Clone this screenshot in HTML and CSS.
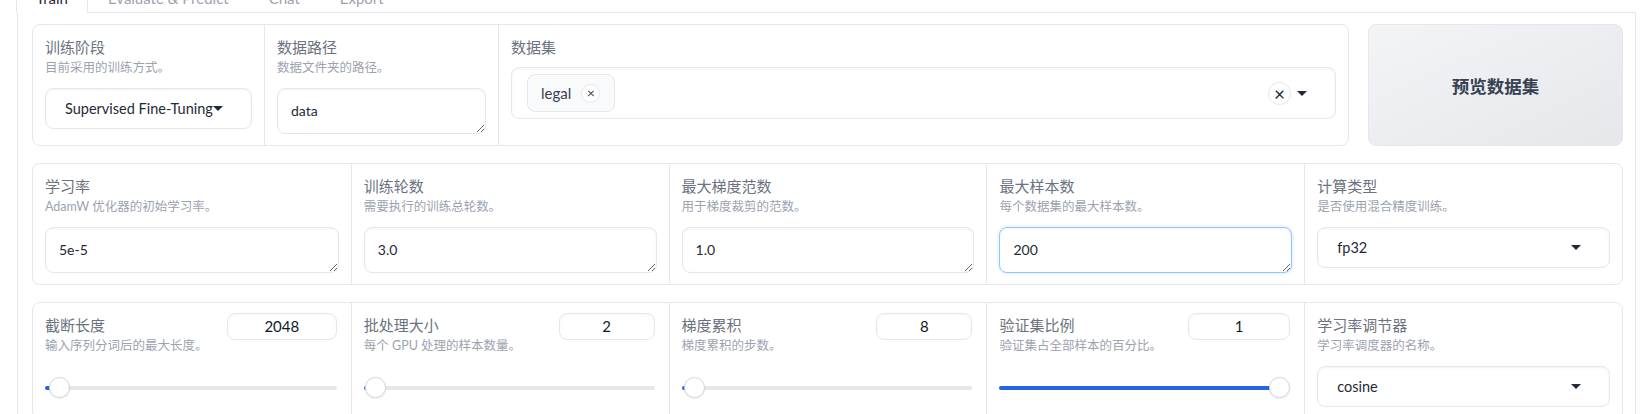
FILE: index.html
```html
<!DOCTYPE html>
<html lang="zh-CN">
<head>
    <meta charset="UTF-8">
    <meta name="viewport" content="width=device-width, initial-scale=1.0">
    <title>LLaMA Board - Train</title>
    <link rel="stylesheet" href="styles.css">
</head>
<body>
    <div class="tabs">
        <!-- Abas -->
        <div class="tab-nav">
            <button class="tab selected">Train</button>
            <button class="tab">Evaluate &amp; Predict</button>
            <button class="tab">Chat</button>
            <button class="tab">Export</button>
        </div>

        <div class="tab-panel">
            <!-- Linha 1: estágio, caminho, dataset + botão -->
            <div class="row-top">
                <div class="group group-top">
                    <div class="field">
                        <div class="field-label">训练阶段</div>
                        <div class="info">目前采用的训练方式。</div>
                        <div class="select">
                            <span class="select-value">Supervised Fine-Tuning</span>
                            <span class="caret"></span>
                        </div>
                    </div>
                    <div class="field">
                        <div class="field-label">数据路径</div>
                        <div class="info">数据文件夹的路径。</div>
                        <textarea class="text-input" rows="1">data</textarea>
                    </div>
                    <div class="field">
                        <div class="field-label">数据集</div>
                        <div class="multiselect">
                            <div class="chip">
                                <span>legal</span>
                                <span class="chip-remove">×</span>
                            </div>
                            <div class="multi-actions">
                                <span class="clear-btn">×</span>
                                <span class="caret"></span>
                            </div>
                        </div>
                    </div>
                </div>
                <button class="btn-preview">预览数据集</button>
            </div>

            <!-- Linha 2: hiperparâmetros -->
            <div class="group group-five">
                <div class="field">
                    <div class="field-label">学习率</div>
                    <div class="info">AdamW 优化器的初始学习率。</div>
                    <textarea class="text-input" rows="1">5e-5</textarea>
                </div>
                <div class="field">
                    <div class="field-label">训练轮数</div>
                    <div class="info">需要执行的训练总轮数。</div>
                    <textarea class="text-input" rows="1">3.0</textarea>
                </div>
                <div class="field">
                    <div class="field-label">最大梯度范数</div>
                    <div class="info">用于梯度裁剪的范数。</div>
                    <textarea class="text-input" rows="1">1.0</textarea>
                </div>
                <div class="field">
                    <div class="field-label">最大样本数</div>
                    <div class="info">每个数据集的最大样本数。</div>
                    <textarea class="text-input focused" rows="1">200</textarea>
                </div>
                <div class="field">
                    <div class="field-label">计算类型</div>
                    <div class="info">是否使用混合精度训练。</div>
                    <div class="select">
                        <span class="select-value">fp32</span>
                        <span class="caret"></span>
                    </div>
                </div>
            </div>

            <!-- Linha 3: sliders -->
            <div class="group group-five">
                <div class="field">
                    <div class="slider-head">
                        <div>
                            <div class="field-label">截断长度</div>
                            <div class="info">输入序列分词后的最大长度。</div>
                        </div>
                        <div class="num num-wide">2048</div>
                    </div>
                    <div class="slider" style="--v: 0.016">
                        <div class="track"><div class="fill"></div></div>
                        <div class="thumb"></div>
                    </div>
                </div>
                <div class="field">
                    <div class="slider-head">
                        <div>
                            <div class="field-label">批处理大小</div>
                            <div class="info">每个 GPU 处理的样本数量。</div>
                        </div>
                        <div class="num">2</div>
                    </div>
                    <div class="slider" style="--v: 0.006">
                        <div class="track"><div class="fill"></div></div>
                        <div class="thumb"></div>
                    </div>
                </div>
                <div class="field">
                    <div class="slider-head">
                        <div>
                            <div class="field-label">梯度累积</div>
                            <div class="info">梯度累积的步数。</div>
                        </div>
                        <div class="num">8</div>
                    </div>
                    <div class="slider" style="--v: 0.008">
                        <div class="track"><div class="fill"></div></div>
                        <div class="thumb"></div>
                    </div>
                </div>
                <div class="field">
                    <div class="slider-head">
                        <div>
                            <div class="field-label">验证集比例</div>
                            <div class="info">验证集占全部样本的百分比。</div>
                        </div>
                        <div class="num num-mid">1</div>
                    </div>
                    <div class="slider" style="--v: 1">
                        <div class="track"><div class="fill"></div></div>
                        <div class="thumb"></div>
                    </div>
                </div>
                <div class="field">
                    <div class="field-label">学习率调节器</div>
                    <div class="info">学习率调度器的名称。</div>
                    <div class="select">
                        <span class="select-value">cosine</span>
                        <span class="caret"></span>
                    </div>
                </div>
            </div>
        </div>
    </div>
</body>
</html>
```

FILE: styles.css
```css
body {
    margin: 0;
    font-family: "Lato", "Noto Sans CJK SC", sans-serif;
    background-color: #fff;
    color: #1f2937;
    overflow: hidden;
}

.tabs {
    margin: 0 15px 0 17px;
}

/* Barra de abas */
.tab-nav {
    display: flex;
    margin-top: -18px;
    border-bottom: 1px solid #e5e7eb;
}

.tab {
    height: 30px;
    padding: 0 19px;
    border: 1px solid transparent;
    border-bottom: none;
    background: none;
    font-family: inherit;
    font-size: 15px;
    line-height: 28px;
    color: #9ca3af;
}

.tab.selected {
    border-color: #e5e7eb;
    border-radius: 6px 6px 0 0;
    background-color: #fff;
    color: #1f2937;
    margin-bottom: -1px;
    height: 31px;
    margin-left: -1px;
}

.tab-panel {
    border: 1px solid #e5e7eb;
    border-top: none;
    padding: 11px 12px 0 14px;
    display: flex;
    flex-direction: column;
    gap: 17px;
}

.row-top {
    display: grid;
    grid-template-columns: 1fr 255px;
    gap: 19px;
}

.group {
    display: grid;
    border: 1px solid #e5e7eb;
    border-radius: 8px;
    background-color: #fff;
}

.group-top {
    grid-template-columns: 231px 234px 1fr;
}

.group-five {
    grid-template-columns: repeat(5, 1fr);
}

.field {
    padding: 11px 12px;
    min-width: 0;
}

.field + .field {
    border-left: 1px solid #e5e7eb;
}

.field-label {
    font-size: 15px;
    line-height: 22px;
    color: #6b7280;
}

.info {
    font-size: 12.5px;
    line-height: 20px;
    color: #9ca3af;
    margin-bottom: 10px;
    white-space: nowrap;
}

/* Campos de entrada */
.text-input {
    display: block;
    width: 100%;
    box-sizing: border-box;
    padding: 12px 13px;
    font-family: inherit;
    font-size: 14px;
    line-height: 20px;
    color: #1f2937;
    border: 1px solid #e5e7eb;
    border-radius: 8px;
    box-shadow: inset 0 1px 3px rgba(0, 0, 0, 0.05);
    outline: none;
    resize: vertical;
}

.text-input.focused {
    border-color: #93c5fd;
    box-shadow: 0 0 0 2px #eff6ff, inset 0 1px 3px rgba(0, 0, 0, 0.05);
}

.select {
    display: flex;
    align-items: center;
    height: 41px;
    box-sizing: border-box;
    padding: 0 28px 0 19px;
    border: 1px solid #e5e7eb;
    border-radius: 8px;
    box-shadow: inset 0 1px 3px rgba(0, 0, 0, 0.05);
    font-size: 14.5px;
    color: #1f2937;
}

.select-value {
    flex: 1;
    min-width: 0;
    white-space: nowrap;
}

.caret {
    width: 0;
    height: 0;
    border-left: 5px solid transparent;
    border-right: 5px solid transparent;
    border-top: 5px solid #1f2937;
    flex-shrink: 0;
}

/* Seleção múltipla */
.multiselect {
    display: flex;
    align-items: center;
    margin-top: 9px;
    height: 52px;
    box-sizing: border-box;
    padding: 0 28px 0 15px;
    border: 1px solid #e5e7eb;
    border-radius: 8px;
    box-shadow: inset 0 1px 3px rgba(0, 0, 0, 0.05);
}

.chip {
    display: flex;
    align-items: center;
    gap: 10px;
    height: 38px;
    box-sizing: border-box;
    padding: 0 14px 0 13px;
    border: 1px solid #e5e7eb;
    border-radius: 8px;
    background-color: #f9fafb;
    font-size: 15px;
    color: #374151;
}

.chip-remove {
    display: flex;
    align-items: center;
    justify-content: center;
    width: 17px;
    height: 17px;
    border: 1px solid #e5e7eb;
    border-radius: 50%;
    background: #fff;
    font-size: 14px;
    line-height: 1;
    color: #374151;
}

.multi-actions {
    margin-left: auto;
    display: flex;
    align-items: center;
    gap: 6px;
}

.clear-btn {
    display: flex;
    align-items: center;
    justify-content: center;
    width: 21px;
    height: 21px;
    border: 1px solid #e5e7eb;
    border-radius: 50%;
    font-size: 19px;
    line-height: 1;
    color: #1f2937;
}

/* Botão de pré-visualização */
.btn-preview {
    border: 1px solid #e5e7eb;
    border-radius: 8px;
    background: linear-gradient(to bottom right, #f3f4f6, #e5e7eb);
    font-family: inherit;
    font-size: 17.5px;
    font-weight: bold;
    color: #374151;
    cursor: pointer;
}

/* Sliders */
.slider-head {
    display: flex;
    justify-content: space-between;
    align-items: flex-start;
}

.num {
    width: 96px;
    height: 27px;
    margin: -1px 2px 0 0;
    box-sizing: border-box;
    border: 1px solid #e5e7eb;
    border-radius: 8px;
    box-shadow: inset 0 1px 3px rgba(0, 0, 0, 0.04);
    text-align: center;
    font-size: 15px;
    line-height: 25px;
    color: #111827;
    flex-shrink: 0;
}

.num-wide {
    width: 110px;
}

.num-mid {
    width: 102px;
}

.slider {
    position: relative;
    height: 21px;
    margin: 11px 2px 0 0;
}

.track {
    position: absolute;
    left: 0;
    right: 0;
    top: 9px;
    height: 4px;
    border-radius: 2px;
    background-color: #e5e7eb;
    overflow: hidden;
}

.fill {
    height: 100%;
    width: calc(var(--v) * (100% - 21px) + 3px);
    background-color: #2563eb;
}

.thumb {
    position: absolute;
    top: 0;
    left: calc(var(--v) * (100% - 21px));
    width: 21px;
    height: 21px;
    box-sizing: border-box;
    border: 1px solid #d1d5db;
    border-radius: 50%;
    background-color: #fff;
    box-shadow: 0 1px 2px rgba(0, 0, 0, 0.08);
}
```
